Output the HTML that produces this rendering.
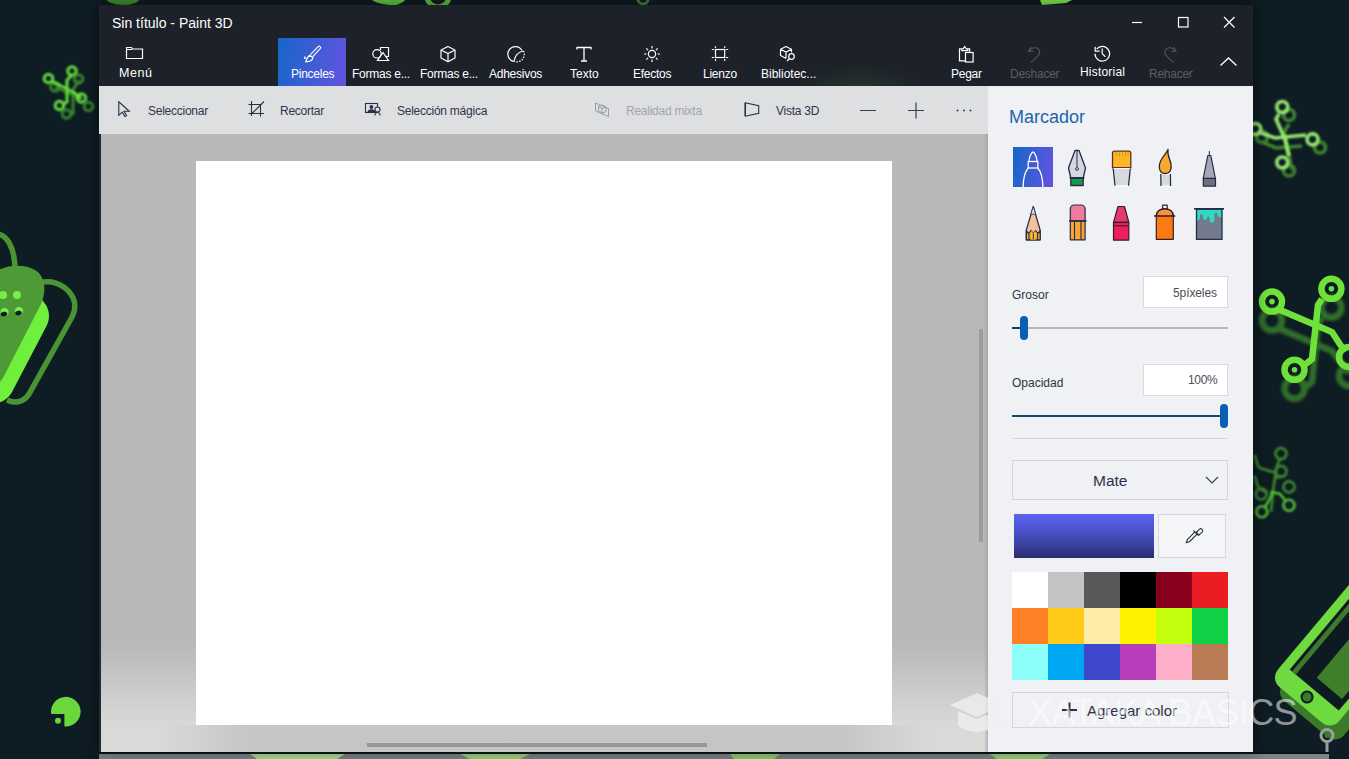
<!DOCTYPE html>
<html><head><meta charset="utf-8">
<style>
*{box-sizing:border-box;margin:0;padding:0}
html,body{width:1349px;height:759px;overflow:hidden;background:#0e1c23;font-family:"Liberation Sans",sans-serif}
.a{position:absolute;white-space:nowrap}
svg.full{position:absolute;left:0;top:0;width:1349px;height:759px}
.tt{position:absolute;font-size:12px;color:#fff;letter-spacing:-0.25px;white-space:nowrap;top:67px}
.lt{position:absolute;font-size:12px;color:#30354a;letter-spacing:-0.25px;white-space:nowrap;top:103.5px}
.pl{position:absolute;font-size:12px;color:#2d3146;white-space:nowrap}
.box{position:absolute;background:#fff;border:1px solid #d9dadd}
.sw{position:absolute;width:36px;height:36px;top:0}
</style></head><body>
<svg class="full" id="bg" width="1349" height="759">
 <defs>
  <filter id="blur1" x="-20%" y="-20%" width="140%" height="140%"><feGaussianBlur stdDeviation="0.8"/></filter>
  <filter id="blur2" x="-20%" y="-20%" width="140%" height="140%"><feGaussianBlur stdDeviation="1.5"/></filter>
 </defs>
 <!-- top blobs -->
 <ellipse cx="123" cy="-2" rx="17" ry="7" fill="#3f8a30"/>
 <path d="M372 0h33c-3 4-10 6-16 5s-13-2-17-5z" fill="#5cc03a"/>
 <circle cx="438" cy="-4" r="11" fill="none" stroke="#5ab83a" stroke-width="5"/>
 <circle cx="643" cy="-1" r="5" fill="none" stroke="#3c7a30" stroke-width="3"/>
 <path d="M1040 0h32l-6 3-24 2z" fill="#7ee04a"/>
 <!-- top-left circuit -->
 <g fill="none" stroke="#3f9a2e" stroke-width="3" opacity=".85" filter="url(#blur1)">
  <path d="M55 87l27 12 M79 80l-6 10v25"/>
  <circle cx="55" cy="87" r="4.3"/><circle cx="78.5" cy="79" r="4.3"/><circle cx="88.5" cy="106.5" r="4.3"/><circle cx="66.5" cy="114" r="4.3"/>
 </g>
 <g fill="none" stroke="#66e03c" stroke-width="3" filter="url(#blur1)">
  <path d="M51 81l22 11 8 6 M72 75l-5 5v22l-5 3"/>
  <circle cx="48.5" cy="78.5" r="4.3"/><circle cx="72" cy="71" r="4.3"/><circle cx="81.5" cy="98" r="4.3"/><circle cx="59.5" cy="105.5" r="4.3"/>
 </g>
 <!-- left big shape -->
 <g>
  <path d="M-22 270C-22 222 15 222 15 270" fill="none" stroke="#4a9434" stroke-width="5.5"/>
  <path d="M40 283c10-3 22 0 30 10 6 7 6 16 2 24l-43 77c-5 8-14 10-22 6" fill="none" stroke="#4a9434" stroke-width="5.5"/>
  <path d="M-10 404l8-1c7-2 11-6 14-11l34-65c4-7 4-15 0-22l-6-8-50 0z" fill="#6ef03c"/>
  <path d="M-5 272c12-8 30-8 40-2 10 6 12 20 6 34l-37 72c-3 6-7 10-12 10z" fill="#4e9a36"/>
  <circle cx="3" cy="295" r="4" fill="#78ef48"/><circle cx="17" cy="295" r="4" fill="#78ef48"/>
  <circle cx="4.5" cy="312" r="4" fill="#78ef48"/><circle cx="19" cy="311" r="4" fill="#78ef48"/>
  <ellipse cx="4" cy="314" rx="3.3" ry="2.2" fill="#0d1a22" transform="rotate(-15 4 314)"/>
  <ellipse cx="18.5" cy="313" rx="3.3" ry="2.2" fill="#0d1a22" transform="rotate(-15 18.5 313)"/>
 </g>
 <!-- pacman -->
 <path d="M64.4 714H51.2A14.8 14.8 0 1 1 64.4 726.4z" fill="#6ad83a"/>
 <circle cx="58" cy="720.8" r="3" fill="#6ad83a"/>
 <!-- right top circuit -->
 <g fill="none" stroke="#458f33" stroke-width="3.6" opacity=".9" filter="url(#blur1)">
  <path d="M1262 142l14 6 26-2 M1289 124l-5 8 8 38"/>
  <circle cx="1289" cy="115" r="5.5"/><circle cx="1262" cy="137" r="5.5"/><circle cx="1320" cy="147.5" r="5.5"/><circle cx="1289" cy="170.5" r="5.5"/>
 </g>
 <g fill="none" stroke="#98ea72" stroke-width="3.6" filter="url(#blur1)">
  <path d="M1261 133l14 5 31-3 M1279 114l-3 5 9 20 4 17"/>
  <circle cx="1282.3" cy="107" r="5.5"/><circle cx="1255.3" cy="129" r="5.5"/><circle cx="1312.6" cy="139.4" r="5.5"/><circle cx="1282.3" cy="162.5" r="5.5"/>
 </g>
 <!-- right big circuit -->
 <g fill="none" stroke="#3c8a2e" stroke-width="6.5" opacity=".75" filter="url(#blur2)">
  <path d="M1280 329l52 22 17 22 M1322 318l-4 6-6 58-10 8"/>
  <circle cx="1272" cy="320.5" r="10"/><circle cx="1331.4" cy="307.6" r="10"/><circle cx="1294.5" cy="388.6" r="10"/><circle cx="1349" cy="376" r="10"/>
 </g>
 <g fill="none" stroke="#6ee23a" stroke-width="6.5">
  <path d="M1280 310l52 22 13 20 M1322 299l-4 6-6 54-10 8"/>
  <circle cx="1272" cy="301.6" r="10"/><circle cx="1331.4" cy="288.8" r="10"/><circle cx="1294.5" cy="369.8" r="10"/><circle cx="1349" cy="357" r="10"/>
 </g>
 <g fill="#6ee23a"><circle cx="1272" cy="301.6" r="2.8"/><circle cx="1331.4" cy="288.8" r="2.8"/><circle cx="1294.5" cy="369.8" r="2.8"/></g>
 <!-- right mid circuit -->
 <g fill="none" stroke="#3f8a2e" stroke-width="2.6" filter="url(#blur1)">
  <path d="M1254 455c3 3 2 10 6 13l16 5 M1280 458l-3 8-4 24-2 22 M1254 476c3 3 2 10 6 13l8 4 M1284 476l-9 2-2 12"/>
  <circle cx="1281" cy="453.6" r="5.5"/><circle cx="1281" cy="471.4" r="5.5"/><circle cx="1289" cy="486.9" r="5.5"/><circle cx="1261.3" cy="494" r="5.5"/>
 </g>
 <g fill="none" stroke="#54c234" stroke-width="2.6" filter="url(#blur1)">
  <path d="M1265 507l6-10 1-5 8 2 5 6"/>
  <circle cx="1261.9" cy="511.8" r="5.5"/><circle cx="1289" cy="505.2" r="5.5"/>
 </g>
 <!-- phone -->
 <g transform="translate(1275 693) rotate(-50)"><rect x="0" y="0" width="200" height="80" rx="12" fill="#3b7a2c"/></g>
 <g transform="translate(1270 679) rotate(-50)">
  <rect x="0" y="0" width="200" height="80" rx="12" fill="#6fd940"/>
  <rect x="20" y="9" width="190" height="64" fill="#0d1a22"/>
  <rect x="20" y="12" width="190" height="5" fill="#3d7a2d"/>
  <rect x="31" y="35" width="190" height="33" fill="#3f7f2c"/>
  <circle cx="10" cy="40" r="6.5" fill="#0d1a22"/>
  <circle cx="10" cy="40" r="4.5" fill="#3b7a2c"/>
 </g>
 <!-- gray circuit bottom right -->
 <circle cx="1327" cy="735.5" r="6" fill="none" stroke="#9a9ea1" stroke-width="3"/>
 <circle cx="1327" cy="735.5" r="2.5" fill="#3b7a2c"/>
 <path d="M1327 741.5V756H1250" fill="none" stroke="#9a9ea1" stroke-width="3"/>
 <!-- bottom strip -->
 <rect x="99" y="752" width="1230" height="2" fill="#0a1418"/>
 <rect x="99" y="754" width="1230" height="5" fill="#7b8488"/>
 <path d="M250 754h95l-8 5h-80z" fill="#a8e08a"/>
 <path d="M460 754h70l-10 5h-50z" fill="#9ad67c"/>
 <path d="M730 754h50l-6 5h-40z" fill="#8ccf6e"/>
 <path d="M990 754h60l-8 5h-45z" fill="#92d874"/>
</svg>
<!-- window -->
<div class="a" style="left:99px;top:5px;width:1154px;height:747px;box-shadow:0 0 14px 2px rgba(0,0,0,.35)"></div>
<div class="a" style="left:99px;top:5px;width:1154px;height:81px;background:#1d2129"></div>
<div class="a" style="left:99px;top:5px;width:1154px;height:81px;background:radial-gradient(ellipse 70px 30px at 761px 88px,rgba(70,130,60,.22),rgba(70,130,60,0))"></div>
<div class="a" style="left:278px;top:38px;width:68px;height:47.5px;background:linear-gradient(100deg,#1766c8,#6453e0)"></div>
<div class="a" style="left:99px;top:85.5px;width:889px;height:48px;background:#dddfe1"></div>
<div class="a" style="left:99px;top:133.5px;width:889px;height:618.5px;background:linear-gradient(180deg,#b7b8b7 0%,#b8b9b8 83%,#d0d1cf 92%,#d9dad8 96%,#d9dad8 100%)"></div>
<div class="a" style="left:160px;top:725px;width:770px;height:27px;background:linear-gradient(90deg,rgba(180,180,180,0),rgba(180,180,180,.55) 12%,rgba(180,180,180,.55) 88%,rgba(180,180,180,0))"></div>
<div class="a" style="left:99px;top:133.5px;width:1.5px;height:618.5px;background:#202c33"></div>
<div class="a" style="left:984px;top:133.5px;width:4px;height:618.5px;background:linear-gradient(90deg,rgba(160,160,165,0),rgba(150,150,155,.6))"></div>
<div class="a" style="left:196px;top:161px;width:696px;height:564px;background:#fff"></div>
<div class="a" style="left:367px;top:743px;width:340px;height:3.5px;background:#979797"></div>
<div class="a" style="left:979px;top:329px;width:4px;height:212.5px;background:#9b9c9b"></div>
<div class="a" style="left:988px;top:85.5px;width:265px;height:666.5px;background:#f0f1f4"></div>

<div class="a" style="left:112px;top:15px;font-size:14px;color:#fff">Sin título - Paint 3D</div>

<div class="tt" style="left:119px;top:65.5px;letter-spacing:0.6px;font-size:12.5px">Menú</div>
<div class="tt" style="left:291px">Pinceles</div>
<div class="tt" style="left:352px">Formas e...</div>
<div class="tt" style="left:420px">Formas e...</div>
<div class="tt" style="left:489px">Adhesivos</div>
<div class="tt" style="left:570px;letter-spacing:0">Texto</div>
<div class="tt" style="left:633px">Efectos</div>
<div class="tt" style="left:703px">Lienzo</div>
<div class="tt" style="left:761px;letter-spacing:0">Bibliotec...</div>
<div class="tt" style="left:951px">Pegar</div>
<div class="tt" style="left:1010px;color:#5b5f68">Deshacer</div>
<div class="tt" style="left:1080px;top:65px;letter-spacing:0.2px">Historial</div>
<div class="tt" style="left:1149px;color:#5b5f68">Rehacer</div>

<div class="lt" style="left:148px">Seleccionar</div>
<div class="lt" style="left:280px">Recortar</div>
<div class="lt" style="left:397px">Selección mágica</div>
<div class="lt" style="left:626px;color:#a2a4aa">Realidad mixta</div>
<div class="lt" style="left:776px">Vista 3D</div>

<!-- right panel -->
<div class="a" style="left:1009px;top:106.5px;font-size:18px;color:#1e64ae">Marcador</div>
<div class="a" style="left:1013px;top:147px;width:40px;height:40px;background:linear-gradient(100deg,#1766c8,#6453e0)"></div>
<div class="pl" style="left:1012px;top:288px">Grosor</div>
<div class="box" style="left:1143px;top:276px;width:85px;height:32px"></div>
<div class="pl" style="left:1173px;top:285.5px;color:#4a4d57;letter-spacing:-0.1px">5píxeles</div>
<div class="a" style="left:1012px;top:327px;width:216px;height:2px;background:#b7b8bb"></div>
<div class="a" style="left:1012px;top:327px;width:10px;height:2px;background:#1b3f6a"></div>
<div class="a" style="left:1020px;top:316px;width:8px;height:24px;border-radius:4px;background:#0a5fb4"></div>
<div class="pl" style="left:1012px;top:376px">Opacidad</div>
<div class="box" style="left:1143px;top:364px;width:85px;height:32px"></div>
<div class="pl" style="left:1188px;top:373px;color:#4a4d57;letter-spacing:-0.3px">100%</div>
<div class="a" style="left:1012px;top:415px;width:212px;height:2px;background:#17476b"></div>
<div class="a" style="left:1220px;top:404px;width:8px;height:24px;border-radius:4px;background:#0a5fb4"></div>
<div class="a" style="left:1013px;top:438px;width:214px;height:1px;background:#d3d4d7"></div>
<div class="a" style="left:1012px;top:460px;width:216px;height:40px;border:1px solid #d4d6d9;background:#f0f1f4"></div>
<div class="a" style="left:1093px;top:471.5px;font-size:15.5px;color:#2d3146">Mate</div>
<div class="a" style="left:1014px;top:514px;width:140px;height:44px;background:linear-gradient(180deg,#5a62ea 0%,#5058d8 25%,#3d41a0 70%,#2a2d6a 100%)"></div>
<div class="a" style="left:1158px;top:514px;width:68px;height:44px;border:1px solid #d8d9dc;background:#f4f5f7"></div>
<div class="a" style="left:1012px;top:572px;width:216px;height:108px">
 <div class="sw" style="left:0;background:#ffffff"></div><div class="sw" style="left:36px;background:#c3c3c3"></div><div class="sw" style="left:72px;background:#585858"></div><div class="sw" style="left:108px;background:#000000"></div><div class="sw" style="left:144px;background:#88001b"></div><div class="sw" style="left:180px;background:#ec1c24"></div>
 <div class="sw" style="top:36px;left:0;background:#ff7f27"></div><div class="sw" style="top:36px;left:36px;background:#ffca18"></div><div class="sw" style="top:36px;left:72px;background:#fdeca6"></div><div class="sw" style="top:36px;left:108px;background:#fff200"></div><div class="sw" style="top:36px;left:144px;background:#c4ff0e"></div><div class="sw" style="top:36px;left:180px;background:#0ed145"></div>
 <div class="sw" style="top:72px;left:0;background:#8cfffb"></div><div class="sw" style="top:72px;left:36px;background:#00a8f3"></div><div class="sw" style="top:72px;left:72px;background:#3f48cc"></div><div class="sw" style="top:72px;left:108px;background:#b83dba"></div><div class="sw" style="top:72px;left:144px;background:#ffaec8"></div><div class="sw" style="top:72px;left:180px;background:#b97a56"></div>
</div>
<div class="a" style="left:1012px;top:692px;width:217px;height:36px;border:1px solid #d4d6d9;background:#f0f1f4"></div>
<div class="a" style="left:1087px;top:702px;font-size:15px;color:#2d3146">Agregar color</div>

<svg class="full" id="icons" width="1349" height="759" fill="none" stroke="#fff" stroke-width="1.2">
 <!-- window controls -->
 <path d="M1132 22.5h10"/>
 <rect x="1178.5" y="17.5" width="9.5" height="9.5"/>
 <path d="M1224 17l10.5 10.5M1234.5 17L1224 27.5"/>
 <!-- menu folder -->
 <path d="M126.5 47.5h5l1 1.5h10v9.5h-16z M126.5 49.5h5.5"/>
 <!-- brush -->
 <g stroke-width="1.1" stroke-linejoin="round"><path d="M318.2 46.6A1.4 1.4 0 0 1 320.2 48.6L312.6 56.8M318.2 46.6L310.4 54.6"/><path d="M309.8 55.2L313 57.6Q312.3 61.6 305.8 61.9Q306.6 57.2 309.8 55.2z"/></g>
 <rect x="304" y="56.6" width="1.6" height="2.2" fill="#fff" stroke="none"/>
 <!-- 2D shapes -->
 <circle cx="377" cy="53.8" r="4.2"/>
 <path d="M380.5 50v-2.5h8v9h-3"/>
 <path d="M383 52.5l-5.5 8h11z"/>
 <!-- cube -->
 <path d="M448 46.5l7 3.5v8l-7 3.8-7-3.8v-8z M441 50l7 3.5 7-3.5 M448 53.5v8"/>
 <!-- sticker -->
 <path d="M522 50.5a7.5 7.5 0 1 0-7.5 11"/>
 <path d="M514 61c1-5 4-9 9.5-10" />
 <path d="M523.5 51a7.5 7.5 0 0 1-9 10.5" stroke-dasharray="1.5 1.3"/>
 <!-- T -->
 <path d="M577 49.5v-2h14v2 M584 47.5v13.5 M581 61h6" stroke-width="1.3"/>
 <!-- sun -->
 <circle cx="652" cy="54" r="3.6"/>
 <path d="M652 46v2.5M652 59.5V62M644 54h2.5M657.5 54h2.5M646.3 48.3l1.8 1.8M655.9 57.9l1.8 1.8M657.7 48.3l-1.8 1.8M648.1 57.9l-1.8 1.8"/>
 <!-- canvas -->
 <rect x="715.5" y="49.5" width="9.2" height="8"/>
 <path d="M711.8 49.5h2.3M725.9 49.5h2.3M711.8 57.5h2.3M725.9 57.5h2.3M715.5 46.2v1.8M724.7 46.2v1.8M715.5 59.1v1.8M724.7 59.1v1.8"/>
 <!-- library -->
 <path d="M786 46.5l5.5 2.8v3M780.5 49.3l5.5-2.8M780.5 49.3v6.2l5.5 3 M780.5 49.3l5.5 2.8 5.5-2.8 M786 52v6"/>
 <circle cx="791.5" cy="56.5" r="2.8"/><path d="M789.5 58.5l-2.5 2.5"/>
 <!-- paste -->
 <path d="M965.5 60.8h-6V48.8h2.5M967.8 48.8h1.8v3.2M961.8 50.6v-1.8h1.4l1.5-2.3 1.5 2.3h1.5v1.8z"/>
 <rect x="965.5" y="52.5" width="7.6" height="9.5"/>
 <!-- undo -->
 <g stroke="#50545c"><path d="M1031.2 46.8L1028.6 51.2L1033.2 51.4"/><path d="M1028.8 51C1032 46.6 1038.5 46.6 1039.6 51.4C1040.2 55 1035.5 59 1031 62.2"/></g>
 <!-- redo -->
 <g stroke="#50545c"><path d="M1173.3 46.8L1175.9 51.2L1171.3 51.4"/><path d="M1175.7 51C1172.5 46.6 1166.0 46.6 1164.9 51.4C1164.3 55 1169.0 59 1173.5 62.2"/></g>
 <!-- history -->
 <path d="M1096.6 49.2a7.3 7.3 0 1 1-1.6 4.6"/><path d="M1095.2 46.8v4.4h4.4"/><path d="M1102.2 48.6v5l3.2 3.2"/>
 <!-- chevron -->
 <path d="M1220.5 65.5l8-7.5 8 7.5" stroke-width="1.3"/>

 <!-- light toolbar icons -->
 <g stroke="#2a2f45" stroke-width="1.1">
  <path d="M118.8 101.8v13.5l3.5-3.2 2.6 4.5 1.7-1-2.5-4.3h5.2z"/>
  <path d="M251.5 101v15M248.5 104.5h12v12M248.5 113.5h15.5M260.5 116.5v0M264 101.5l-12 12"/>
  <rect x="365.5" y="103.5" width="12" height="9"/>
  <path d="M374.5 115.5l2-3.5M380.5 115.5l-2-3.5"/>
  <circle cx="377.5" cy="109.5" r="2.5" fill="#dfe0e3"/>
  <circle cx="371.4" cy="107" r="1.9" fill="#2a2f45" stroke="none"/><path d="M367.3 112.5c.3-2.2 1.8-3.3 4.1-3.3s3.6 1 4.1 2.5v.8z" fill="#2a2f45" stroke="none"/>
  <path d="M745.2 102.6v13.6" stroke-width="1.6"/><path d="M745.2 102.8l13.5 2.9v7.6l-13.5 2.9"/>
 </g>
 <g stroke="#9a9da6" stroke-width="1">
  <path d="M595.5 103l13 5.5v8l-13-5.5z"/>
  <path d="M598.5 106.5l4-1.5 3.5 2v4.5l-3.5 1.5-4-2z M598.5 106.5l3.5 2 4-1.5 M602 108.5v4.5"/>
 </g>
 <!-- zoom controls -->
 <g stroke="#3a3f52" stroke-width="1.2">
  <path d="M860 110.5h16M908 110.5h16M916 102.5v16"/>
 </g>
 <g fill="#3a3f52" stroke="none"><circle cx="957.5" cy="110.5" r="1"/><circle cx="964" cy="110.5" r="1"/><circle cx="970.5" cy="110.5" r="1"/></g>


 <!-- brushes -->
 <g stroke="#fff" stroke-width="1.3" fill="none">
  <path d="M1029 161.5c0-4 2.5-9.5 4-9.5s4 5.5 4 9.5"/>
  <rect x="1028.2" y="161.5" width="9.6" height="6.5"/>
  <path d="M1028.2 168c-3.5 4-5 11-5 19M1037.8 168c3.5 4 5 11 5 19"/>
 </g>
 <g stroke="#262a48" stroke-width="1.3" stroke-linejoin="round">
  <path d="M1075 150.5h4l6.5 17.5-2.3 10h-12.4l-2.3-10z" fill="#d5d6e2"/>
  <path d="M1077 151v16" stroke-width="1"/>
  <circle cx="1077" cy="169" r="1.4" fill="#fff" stroke-width="1"/>
  <rect x="1070.8" y="178" width="12.4" height="7.5" fill="#17994a"/>
  <path d="M1069.5 178h15" stroke-width="1.5"/>
 </g>
 <g stroke-linejoin="round">
  <path d="M1114.5 151.2h14.3a2 2 0 0 1 2 2v14.8h-18.3v-14.8a2 2 0 0 1 2-2z" fill="#fdb52a" stroke="#5b3318" stroke-width="1.3"/>
  <path d="M1116.5 152.5v3M1119.5 152.5v4M1122.5 152.5v3M1125.5 152.5v4M1128 152.5v3" stroke="#c98a1a" stroke-width=".8"/>
  <path d="M1112.8 168h17.8" stroke="#5b3318" stroke-width="1.5"/>
  <path d="M1113.2 168.5l1.8 17.3h13.5l1.8-17.3z" fill="#d7d8e0"/>
  <path d="M1113.2 168.5l1.8 17.3M1130.3 168.5l-1.8 17.3" stroke="#262a48" stroke-width="1.3"/>
 </g>
 <g stroke-linejoin="round">
  <path d="M1160.8 174v12h9.8v-12z" fill="#d7d8e0"/>
  <path d="M1160.8 174l.2 12M1170.4 174l.2 12" stroke="#262a48" stroke-width="1.3"/>
  <path d="M1168 149.5c-1 3-3.5 5-6 9s-3 7.5-2.5 10c.5 3 2 5 5.5 5s5.5-2 6-5c.6-3-.2-6-1.3-9-1.3-3.5-2.3-6-1.7-10z" fill="#f7a930" stroke="#35262a" stroke-width="1.3"/>
 </g>
 <g stroke="#262a48" stroke-width="1.2" stroke-linejoin="round">
  <path d="M1209.3 151v4.5" stroke-width="1"/>
  <path d="M1207.8 155.5h3l4.6 23h-12.2z" fill="#a5a6b6"/>
  <rect x="1203.3" y="178.3" width="12.2" height="7.8" fill="#6b707f"/>
 </g>
 <g stroke="#262a48" stroke-width="1.2" stroke-linejoin="round">
  <path d="M1033.3 206.5l6.8 23.5v9.8h-13.8v-9.8z" fill="#f3c29c"/>
  <path d="M1033.3 206.5l2.5 8.5c-2-1-3.5-1.2-5.2-.5z" fill="#e0dff0" stroke-width=".8"/>
  <path d="M1026.3 230.5l2.3 3 2.4-3 2.3 3 2.3-3 2.3 3 2.3-3v9.3h-13.8z" fill="#f3a43a"/>
  <path d="M1031 230.5l2.3 3 2.3-3v9.3h-4.6z" fill="#f7c51e" stroke="none"/>
  <path d="M1029 233.5v6M1033.3 233.5v6M1037.6 233.5v6" stroke-width="1"/>
 </g>
 <g stroke="#262a48" stroke-width="1.2" stroke-linejoin="round">
  <path d="M1070.3 221v-12a4 4 0 0 1 4-4h6.8a4 4 0 0 1 4 4v12z" fill="#f07aa0"/>
  <rect x="1070.3" y="221" width="14.8" height="18.8" fill="#f6a534"/>
  <path d="M1069 221h17.6" stroke-width="1.5"/>
  <path d="M1074.5 221v18.8M1081 221v18.8" stroke-width="1.1"/>
 </g>
 <g stroke="#3a1a30" stroke-width="1.2" stroke-linejoin="round">
  <path d="M1118 206.5h6.5l4.3 15.8h-15.3z" fill="#e53a70"/>
  <rect x="1113.5" y="222.3" width="15.3" height="17.8" fill="#ee1d5e"/>
  <path d="M1113.5 225.8h15.3" stroke-width="1.1"/>
 </g>
 <g stroke="#3a1e24" stroke-width="1.2" stroke-linejoin="round">
  <rect x="1162.6" y="205.2" width="4.6" height="3.8" fill="#e8e8f0"/>
  <circle cx="1164.9" cy="207.1" r=".9" fill="#fff" stroke="none"/>
  <path d="M1156.3 239.3v-23.3c0-4.5 3.5-7.2 8.5-7.2s8.5 2.7 8.5 7.2v23.3z" fill="#fb7a12"/>
  <path d="M1157.4 215.4c0-3.8 3-6 7.4-6s7.4 2.2 7.4 6z" fill="#f3913f" stroke="none"/>
  <path d="M1156.3 216c0-4.5 3.5-7.2 8.5-7.2s8.5 2.7 8.5 7.2" fill="none"/>
  <path d="M1154 216h21.3" stroke-width="1.5"/>
 </g>
 <g stroke-linejoin="round">
  <rect x="1196.5" y="209" width="25.5" height="30.4" fill="#2fd9c2" stroke="none"/>
  <path d="M1197 239V221Q1199 221 1200 218V215.5Q1201.5 213 1203 215.5V218Q1204 220.5 1205.5 220Q1207 219 1207 217.5Q1208 215.5 1209.5 217.5V221Q1211 223.5 1213 222.6Q1214.5 222 1214.5 219V214Q1216 211 1217.5 214V216Q1219 218 1221.5 217V239z" fill="#737b8a" stroke="none"/>
  <rect x="1196.5" y="209" width="25.5" height="30.4" fill="none" stroke="#262a48" stroke-width="1.3"/>
  <path d="M1194 208.8h30" stroke="#262a48" stroke-width="1.6"/>
 </g>
 <!-- mate chevron -->
 <path d="M1206 477l6 6 6-6" stroke="#3a3f52" stroke-width="1.2"/>
 <!-- eyedropper -->
 <g stroke="#2d3146" stroke-width="1.1" stroke-linejoin="round">
  <path d="M1186.3 542.7l1.2-3.4 7.4-7.4 2.2 2.2-7.4 7.4z"/>
  <path d="M1193.3 530.3l5.4 5.4"/>
  <path d="M1196.3 532.5l3.2-3.4a2 2 0 0 1 2.8 2.8l-3.4 3.2z"/>
 </g>
 <!-- plus -->
 <path d="M1062 710h15M1069.5 702.5v15" stroke="#2d3146" stroke-width="2"/>
</svg>
<div class="a" style="left:1028px;top:695px;font-size:36px;color:rgba(255,255,255,.55);letter-spacing:-0.6px;line-height:1">XATAKA BASICS</div>
<svg class="a" style="left:940px;top:685px" width="70" height="55">
 <path d="M10 20l27-12 27 12-27 12z" fill="rgba(240,240,240,.75)"/>
 <path d="M18 26v14c5 5 14 7 19 7s14-2 19-7v-14l-19 8z" fill="rgba(240,240,240,.75)"/>
 <circle cx="64" cy="40" r="2.5" fill="none" stroke="rgba(240,240,240,.6)" stroke-width="1"/>
</svg>
</body></html>
